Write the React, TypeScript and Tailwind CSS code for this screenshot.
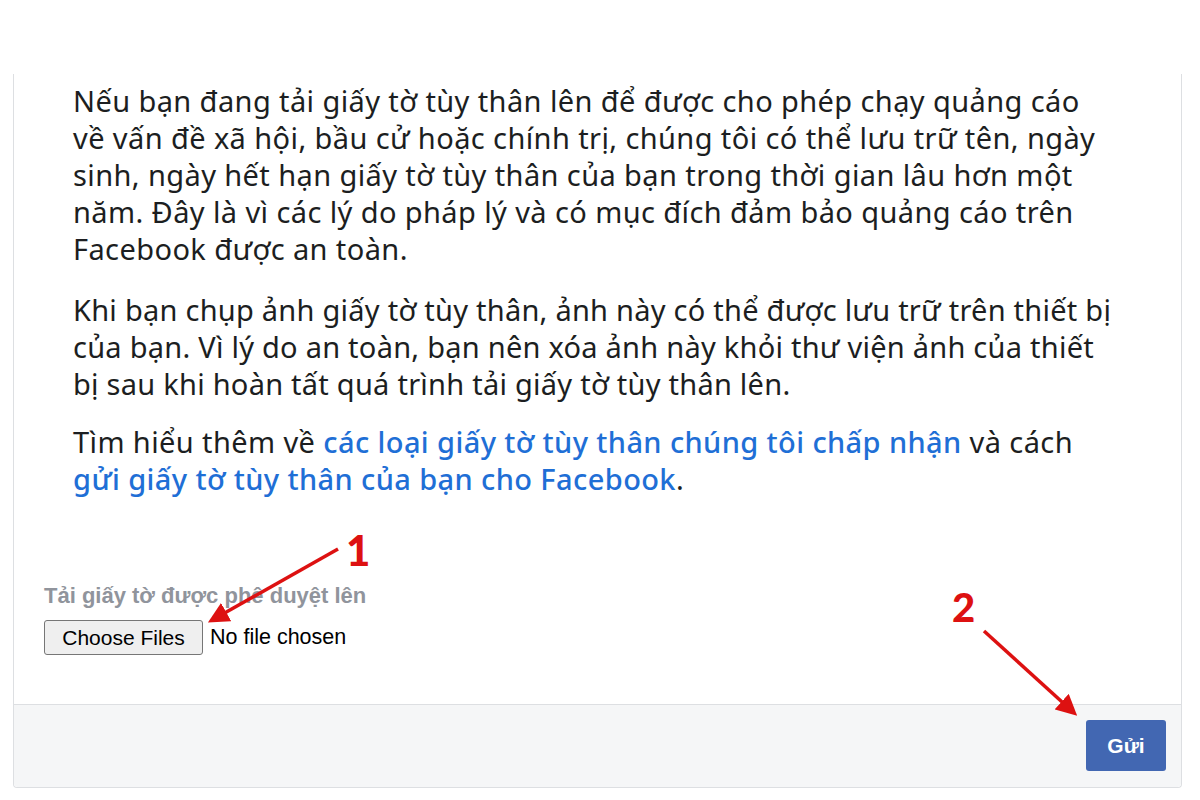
import React from 'react';

export default function App() {
  return (
    <div className="relative w-[1200px] h-[800px] bg-white overflow-hidden">
      {/* Card */}
      <div className="ml-[13px] mr-[18px] mt-[74px] border-x border-b border-[#dddfe2] rounded-b-[4px] flex flex-col">
        <div className="pl-[59px] pr-[10px] pt-[8px] h-[630px] flex flex-col">
          <div
            className="text-[#1c1e21] text-[29px] leading-[37px] tracking-[0.4px] whitespace-nowrap"
            style={{ fontFamily: '"Noto Sans", "Open Sans", sans-serif' }}
          >
            <p>
              Nếu bạn đang tải giấy tờ tùy thân lên để được cho phép chạy quảng cáo
              <br />
              về vấn đề xã hội, bầu cử hoặc chính trị, chúng tôi có thể lưu trữ tên, ngày
              <br />
              sinh, ngày hết hạn giấy tờ tùy thân của bạn trong thời gian lâu hơn một
              <br />
              năm. Đây là vì các lý do pháp lý và có mục đích đảm bảo quảng cáo trên
              <br />
              Facebook được an toàn.
            </p>
            <p className="mt-[24px] tracking-[0.25px]">
              Khi bạn chụp ảnh giấy tờ tùy thân, ảnh này có thể được lưu trữ trên thiết bị
              <br />
              của bạn. Vì lý do an toàn, bạn nên xóa ảnh này khỏi thư viện ảnh của thiết
              <br />
              bị sau khi hoàn tất quá trình tải giấy tờ tùy thân lên.
            </p>
            <p className="mt-[21px]">
              Tìm hiểu thêm về{' '}
              <span className="text-[#1f6fd6] font-medium">các loại giấy tờ tùy thân chúng tôi chấp nhận</span> và cách
              <br />
              <span className="text-[#1f6fd6] font-medium">gửi giấy tờ tùy thân của bạn cho Facebook</span>.
            </p>
          </div>
          <div
            className="-ml-[29px] mt-[87px] flex flex-col"
            style={{ fontFamily: '"Liberation Sans", Arial, sans-serif' }}
          >
            <div className="text-[#90949c] font-bold text-[22px] leading-[24px]">
              Tải giấy tờ được phê duyệt lên
            </div>
            <div className="mt-[12px] flex items-center">
              <div className="h-[35px] w-[159px] flex items-center justify-center bg-[#efefef] border border-[#767676] rounded-[3px] text-[21px] text-black">
                Choose Files
              </div>
              <span className="ml-[7px] text-[21.5px] text-black">No file chosen</span>
            </div>
          </div>
        </div>
        {/* Footer */}
        <div className="h-[83px] bg-[#f5f6f7] border-t border-[#dddfe2] rounded-b-[4px] flex items-start justify-end pt-[15px] pr-[15px]">
          <div
            className="w-[80px] h-[51px] bg-[#4267b2] rounded-[3px] flex items-center justify-center text-white font-bold text-[21px]"
            style={{ fontFamily: '"Liberation Sans", Arial, sans-serif' }}
          >
            Gửi
          </div>
        </div>
      </div>

      {/* Annotations */}
      <svg className="absolute left-0 top-0 pointer-events-none" width="1200" height="800">
        <defs>
          <marker id="ah" markerWidth="6" markerHeight="6" refX="4" refY="3" orient="auto" markerUnits="strokeWidth">
            <path d="M0,0 L6,3 L0,6 Z" fill="#dd1111" />
          </marker>
        </defs>
        <line x1="338" y1="549" x2="214" y2="619" stroke="#dd1111" strokeWidth="3.5" markerEnd="url(#ah)" />
        <line x1="984" y1="631" x2="1072" y2="711" stroke="#dd1111" strokeWidth="3.5" markerEnd="url(#ah)" />
        <text x="346" y="566" fill="#dd1111" fontSize="42" fontWeight="900" fontFamily="Lato, 'Liberation Sans', sans-serif">1</text>
        <text x="952" y="622" fill="#dd1111" fontSize="40" fontWeight="900" fontFamily="Lato, 'Liberation Sans', sans-serif">2</text>
      </svg>
    </div>
  );
}
